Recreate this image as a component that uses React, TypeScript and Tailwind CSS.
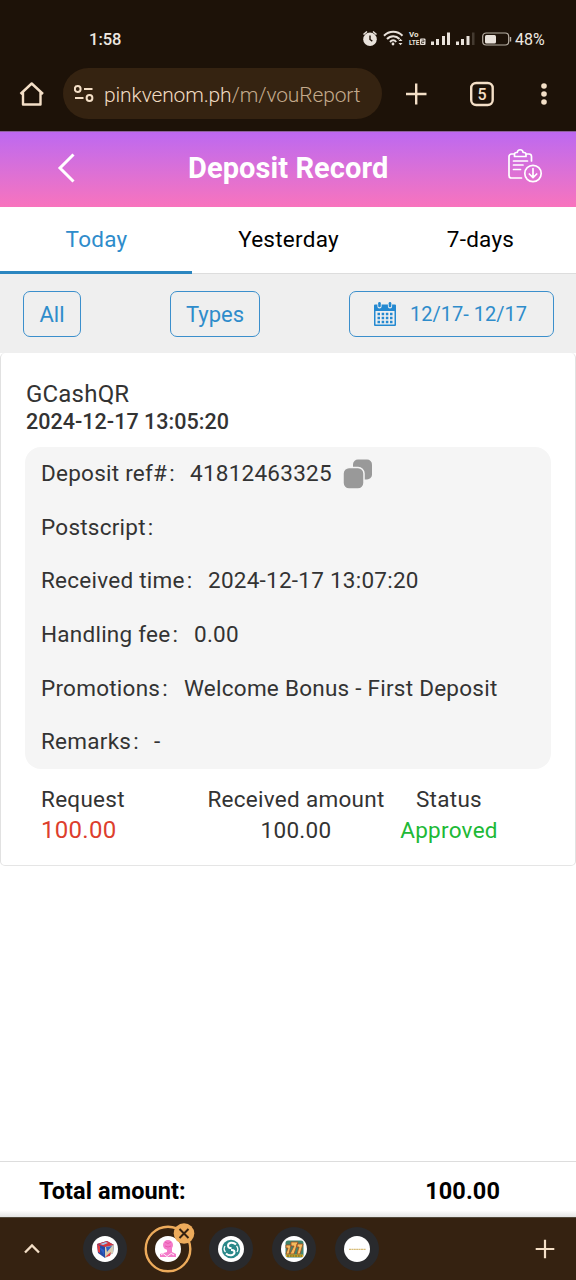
import React from "react";

const details = [
  { label: "Deposit ref#", value: "41812463325", labelWidth: "w-[149px]", copy: true },
  { label: "Postscript", value: "", labelWidth: "w-[149px]" },
  { label: "Received time", value: "2024-12-17 13:07:20", labelWidth: "w-[167px]" },
  { label: "Handling fee", value: "0.00", labelWidth: "w-[153px]" },
  { label: "Promotions", value: "Welcome Bonus - First Deposit", labelWidth: "w-[143px]" },
  { label: "Remarks", value: "-", labelWidth: "w-[113px]" },
];

function StatusIcons() {
  return (
    <svg width="150" height="20" viewBox="0 0 150 20" className="shrink-0" fill="none" stroke="#e9e2db">
      <circle cx="8" cy="10.3" r="6.8" fill="#e9e2db" stroke="none" />
      <path d="M1.5 5.5 5 2.5M11 2.5l3.5 3" strokeWidth="1.6" />
      <path d="M8 6.5v4l2.3 1.6" stroke="#1d1208" strokeWidth="1.4" />
      <path d="M22 6.8c5-5.3 13.500-5.300 18.500 0M25 10c3.500-3.800 9-3.800 12.500 0M28 13c2-2.200 4.500-2.200 6.200 0" strokeWidth="2" />
      <circle cx="31" cy="15" r="1.4" fill="#e9e2db" stroke="none" />
      <path d="m36.500 12 2-2.200 2 2.200zM36.500 14l2 2.200 2-2.200z" fill="#e9e2db" stroke="none" />
      <g fill="#e9e2db" stroke="none" fontFamily="Roboto, sans-serif" fontWeight="700">
        <text x="47" y="8.200" fontSize="7.800" textLength="9.500" lengthAdjust="spacingAndGlyphs">Vo</text>
        <text x="47" y="16" fontSize="8" textLength="10.500" lengthAdjust="spacingAndGlyphs">LTE</text>
      </g>
      <rect x="58" y="9.500" width="5.500" height="6.500" rx="1" fill="#e9e2db" stroke="none" />
      <path d="M59.500 11h2.500v1.700h-2.500v1.800h2.500" stroke="#1d1208" strokeWidth=".7" />
      <g fill="#e9e2db" stroke="none">
        <path d="M69 12.500h3V16h-3zM74 10h3v6h-3zM80 7h3v9h-3zM85 3.500h3V16h-3zM94 12.500h3V16h-3zM99 10h3v6h-3zM104.500 7h3v9h-3z" />
        <path d="M110 3.500h2.500V16H110z" fill="#443a30" />
        <rect x="123" y="6" width="11" height="8.500" rx="1.500" />
      </g>
      <rect x="120.700" y="4" width="26" height="12" rx="3.500" strokeWidth="1.200" stroke="#b8afa4" />
      <path d="M148.500 8v4.500" strokeWidth="1.400" stroke="#b8afa4" />
    </svg>
  );
}

function StatusBar() {
  return (
    <div className="flex h-[60px] items-center pl-[89px] pt-[18px] text-[#eee8e1]">
      <span className="w-[273px] pt-px text-[16.500px] font-medium leading-5">1:58</span>
      <StatusIcons />
      <span className="ml-[3px] pt-px text-[16px] leading-5 tracking-[-0.050px]">48%</span>
    </div>
  );
}

function AddressBar() {
  return (
    <div className="flex h-[71px] items-start pl-[19px] pt-2 text-[#f4dfc7]">
      <svg width="26" height="52" viewBox="0 0 26 52" fill="none" stroke="currentColor" strokeWidth="2.400" strokeLinejoin="round">
        <path d="M1.500 26 12.700 15.500 24 26M4 24.500v12h17.500v-12" />
      </svg>
      <div className="ml-[18px] flex h-[51px] w-[319px] items-center rounded-full bg-[#352311]">
        <svg width="20" height="18" viewBox="0 0 20 18" className="ml-[11px]" fill="none" stroke="currentColor" strokeWidth="2">
          <circle cx="3.700" cy="4" r="2.900" />
          <path d="M10 4h8.500M1 13h8.500" />
          <circle cx="15.500" cy="13" r="2.900" />
        </svg>
        <span className="ml-[10px] whitespace-nowrap pt-[4px] font-[Roboto] text-[21px] font-light tracking-[-0.140px] text-[#c3aa8c]">
          <span className="text-[#f0dbc2]">pinkvenom.ph</span>/m/vouReport
        </span>
      </div>
      <svg width="174" height="52" viewBox="0 0 174 52" className="ml-[20px]" fill="none" stroke="currentColor">
        <path d="M4 26h20.500M14.200 15.500v21" strokeWidth="2.400" />
        <rect x="69.200" y="15" width="21.500" height="22" rx="5" strokeWidth="2.400" />
        <text x="80" y="31.500" textAnchor="middle" fontFamily="Roboto, sans-serif" fontSize="16" fontWeight="500" fill="currentColor" stroke="none">5</text>
        <g fill="currentColor" stroke="none">
          <circle cx="142" cy="18" r="2.800" />
          <circle cx="142" cy="26" r="2.800" />
          <circle cx="142" cy="34" r="2.800" />
        </g>
      </svg>
    </div>
  );
}

function PageHeader() {
  return (
    <header className="flex h-[76px] items-center border-t border-[#8d619c] bg-linear-to-b from-[#bd68f0] to-[#f873bd] pb-[3px] text-white">
      <svg width="20" height="32" viewBox="0 0 20 32" className="ml-[56px]" fill="none" stroke="currentColor" strokeWidth="3">
        <path d="M17.500 2.500 4 16l13.500 13.500" />
      </svg>
      <h1 className="ml-[112px] w-[319px] text-[29px] font-bold leading-9 tracking-[0.080px]">Deposit Record</h1>
      <svg width="36" height="36" viewBox="0 0 36 36" className="-mt-[5px] shrink-0" fill="none" stroke="currentColor" strokeWidth="1.700" strokeLinecap="round" strokeLinejoin="round">
        <path d="M7 6H4.500A2.500 2.500 0 0 0 2 8.500v19A2.500 2.500 0 0 0 4.500 30h10M19.500 6H22a2.500 2.500 0 0 1 2.500 2.500V13" />
        <path d="M7.500 8.500V6.200c0-1.200.8-1.700 2-1.700h.8c.3-3.700 5.500-3.700 5.800 0h.9c1.200 0 2 .5 2 1.700v2.300zM6.500 13h14M6.500 17h9.500M6.500 21.500h7" />
        <circle cx="26" cy="25.500" r="8.200" />
        <path d="M26 20.500v9M22.300 26l3.700 3.700 3.700-3.700" />
      </svg>
    </header>
  );
}

function CalendarIcon() {
  return (
    <svg width="22" height="24" viewBox="0 0 22 24" fill="#2489d1" className="shrink-0">
      <path d="M1 2.500h20a1 1 0 0 1 1 1v19.500a1 1 0 0 1-1 1H1a1 1 0 0 1-1-1V3.500a1 1 0 0 1 1-1Zm.5 6.500v13.500h19V9z" fillRule="evenodd" />
      <path d="M5.500 2.500v2M16 2.500v2" stroke="#efefef" strokeWidth="4.200" strokeLinecap="round" />
      <rect x="4.200" y="0" width="2.600" height="5.300" rx="1.300" />
      <rect x="14.700" y="0" width="2.600" height="5.300" rx="1.300" />
      <path d="M3.500 12h15M3.500 16h15M3.500 20h15" stroke="#2489d1" strokeWidth="2.500" strokeDasharray="2.500 1.670" />
    </svg>
  );
}

function CopyIcon() {
  return (
    <svg width="30" height="30" viewBox="0 0 30 30" fill="#999">
      <rect x="10" y=".5" width="19" height="20" rx="5" />
      <rect x="0" y="8.500" width="21" height="21.500" rx="6" stroke="#f5f5f5" strokeWidth="1.500" />
    </svg>
  );
}

function Favicon({ kind }: { kind: string }) {
  return (
    <svg width="48" height="48" viewBox="0 0 48 48" className="shrink-0 overflow-visible">
      {kind === "person" ? (
        <circle cx="24" cy="24" r="22.300" fill="#352211" stroke="#edab5b" strokeWidth="2.400" />
      ) : (
        <circle cx="24" cy="24" r="22" fill="#292a2d" />
      )}
      <circle cx="24" cy="24" r="13" fill="#fff" />
      {kind === "cube" && (
        <g>
          <path d="m16 19 10-3 7 4-1 8-8 5-7-5z" fill="#244aa5" />
          <path d="m16 19 10-3 7 4-9 2z" fill="#d8343c" />
          <path d="m19 19 6-2 2 1-5 2z" fill="#9ec7ee" />
          <path d="m24 22 9-2-1 8-8 5z" fill="#d6ccb1" />
          <path d="m25 22 6-1-5 6zM18 22l5 3v5z" fill="#2d5ec6" />
          <path d="m16 19 3 2v7l-2-1zM24 32l6-5-1 4z" fill="#e23b40" />
        </g>
      )}
      {kind === "person" && (
        <g fill="#f47aca">
          <circle cx="24" cy="20" r="5" />
          <path d="M23 22h5v5l4 2v3H16v-3l7-2z" />
          <path d="M21 17q3 3 6 0M21 21q3 2 6 0" fill="none" stroke="#e75bad" />
          <path d="M17 30q2-3 4 0t4 0 5 0" fill="none" stroke="#fff0fa" />
        </g>
      )}
      {kind === "letter" && (
        <g>
          <circle cx="24" cy="24" r="9.200" fill="#298889" />
          <path d="M29 19.500c-3-3-8-2-8 1.200 0 2.500 2.500 2.300 3.500 2.300M19 28.500c3 3 8.500 2 8.500-1.200 0-2.500-2.500-2.300-3.500-2.300" fill="none" stroke="#fff" strokeWidth="2" />
          <path d="M18 21q-2 3.500.5 6M29.500 21q2.500 3 .5 6" fill="none" stroke="#fff" strokeWidth="1.300" />
        </g>
      )}
      {kind === "sevens" && (
        <g>
          <rect x="15.500" y="15.500" width="18" height="17" rx="2.500" fill="#42846c" />
          <path d="M16 20h5l-2 9h-3l2-6h-2zM21 17h7l-4 12h-4l4-8h-3zM27 19h6l-3 10h-3l2-7h-2z" fill="#f4bb5d" stroke="#9c4c22" strokeWidth=".8" />
          <path d="M16 29.500h17v2.500H16z" fill="#e0ac25" />
          <path d="M17 31h15" stroke="#4d5926" strokeDasharray="2 .7" />
        </g>
      )}
      {kind === "wordmark" && <path d="M16 24.300h17" stroke="#d7bd79" strokeWidth="1.300" strokeDasharray="2 .4" />}
      {kind === "person" && (
        <g>
          <circle cx="40" cy="8.500" r="10.300" fill="#edab5b" />
          <path d="m35.500 4 9 9m0-9-9 9" stroke="#352211" strokeWidth="2" />
        </g>
      )}
    </svg>
  );
}

function TabStrip() {
  return (
    <div className="flex h-[63px] items-center border-t border-[#51483a] bg-[#352211] text-[#f4dfc7]">
      <svg width="16" height="12" viewBox="0 0 16 12" className="ml-[24px]" fill="none" stroke="currentColor" strokeWidth="2.300">
        <path d="m1 9.500 7-7 7 7" />
      </svg>
      <div className="ml-[41px] flex gap-[15px]">
        <Favicon kind="cube" />
        <Favicon kind="person" />
        <Favicon kind="letter" />
        <Favicon kind="sevens" />
        <Favicon kind="wordmark" />
      </div>
      <svg width="20" height="20" viewBox="0 0 20 20" className="ml-[154px] shrink-0" fill="none" stroke="currentColor" strokeWidth="2.200">
        <path d="M.7 10h18.600M10 .7v18.600" />
      </svg>
    </div>
  );
}

export default function App() {
  return (
    <div className="flex h-[1280px] w-[576px] flex-col overflow-hidden bg-white font-[Roboto,sans-serif] text-[#333]">
      <div className="bg-[#1d1208]">
        <StatusBar />
        <AddressBar />
      </div>
      <PageHeader />
      <nav className="grid h-[67px] grid-cols-3 text-center text-[22.500px] leading-[65px] tracking-[0.250px] text-black">
        <div className="h-[67px] border-b-[3px] border-[#2b86c0] pl-px text-[#2e8ccb]">Today</div>
        <div className="h-[67px] border-b border-[#ddd] pl-px">Yesterday</div>
        <div className="h-[67px] border-b border-[#ddd] pl-px">7-days</div>
      </nav>
      <div className="flex h-[79px] items-start bg-[#efefef] pl-[23px] pt-[17px] text-[22px] leading-[45px] text-[#2e8ccb]">
        <button className="h-[46px] w-[58px] rounded-[7px] border border-[#3b8fcc]">All</button>
        <button className="ml-[89px] h-[46px] w-[90px] rounded-[7px] border border-[#3b8fcc]">Types</button>
        <button className="ml-[89px] flex h-[46px] w-[205px] items-center rounded-[7px] border border-[#3b8fcc] pl-[24px]">
          <CalendarIcon />
          <span className="ml-[14px] whitespace-nowrap text-[20px]">12/17- 12/17</span>
        </button>
      </div>
      <section className="flex h-[513px] flex-col rounded-[5px] border border-t-0 border-[#e1e1e1] border-b-[#e5e5e5] px-[24px] pt-[27px]">
        <h2 className="pl-px text-[24px] leading-[28px] tracking-[0.200px]">GCashQR</h2>
        <p className="pl-px text-[21.500px] font-medium leading-[28px] tracking-[0.030px]">2024-12-17 13:05:20</p>
        <div className="mt-[11px] grid h-[322px] grid-rows-6 rounded-[16px] bg-[#f5f5f5] pl-4 text-[22.500px] tracking-[0.250px]">
          {details.map((item) => (
            <div key={item.label} className="flex items-center whitespace-nowrap">
              <span className={`flex shrink-0 ${item.labelWidth}`}>
                {item.label}
                <span className="ml-[2px]">:</span>
              </span>
              <span>{item.value}</span>
              {item.copy && (
                <span className="ml-[11px]">
                  <CopyIcon />
                </span>
              )}
            </div>
          ))}
        </div>
        <div className="mt-[15px] flex pl-4 text-[22.500px] leading-[31px] tracking-[0.280px]">
          <div className="w-[166px]">
            <p>Request</p>
            <p className="text-[24px]">
              <span className="text-[#dd3e2d]">100.00</span>
            </p>
          </div>
          <div className="w-[178px] whitespace-nowrap text-center">
            <p>Received amount</p>
            <p>100.00</p>
          </div>
          <div className="ml-[14px] w-[100px] text-center">
            <p>Status</p>
            <p className="text-[#20b936]">Approved</p>
          </div>
        </div>
      </section>
      <div className="mt-auto flex h-[56px] items-center justify-between border-t border-[#ddd] bg-linear-to-b from-white from-88% to-[#e4e4e4] pl-[39px] pr-[76px] pt-[4px] text-[23.500px] font-bold text-black">
        <span className="tracking-[0.100px]">Total amount:</span>
        <span className="tracking-[0.100px]">100.00</span>
      </div>
      <TabStrip />
    </div>
  );
}
